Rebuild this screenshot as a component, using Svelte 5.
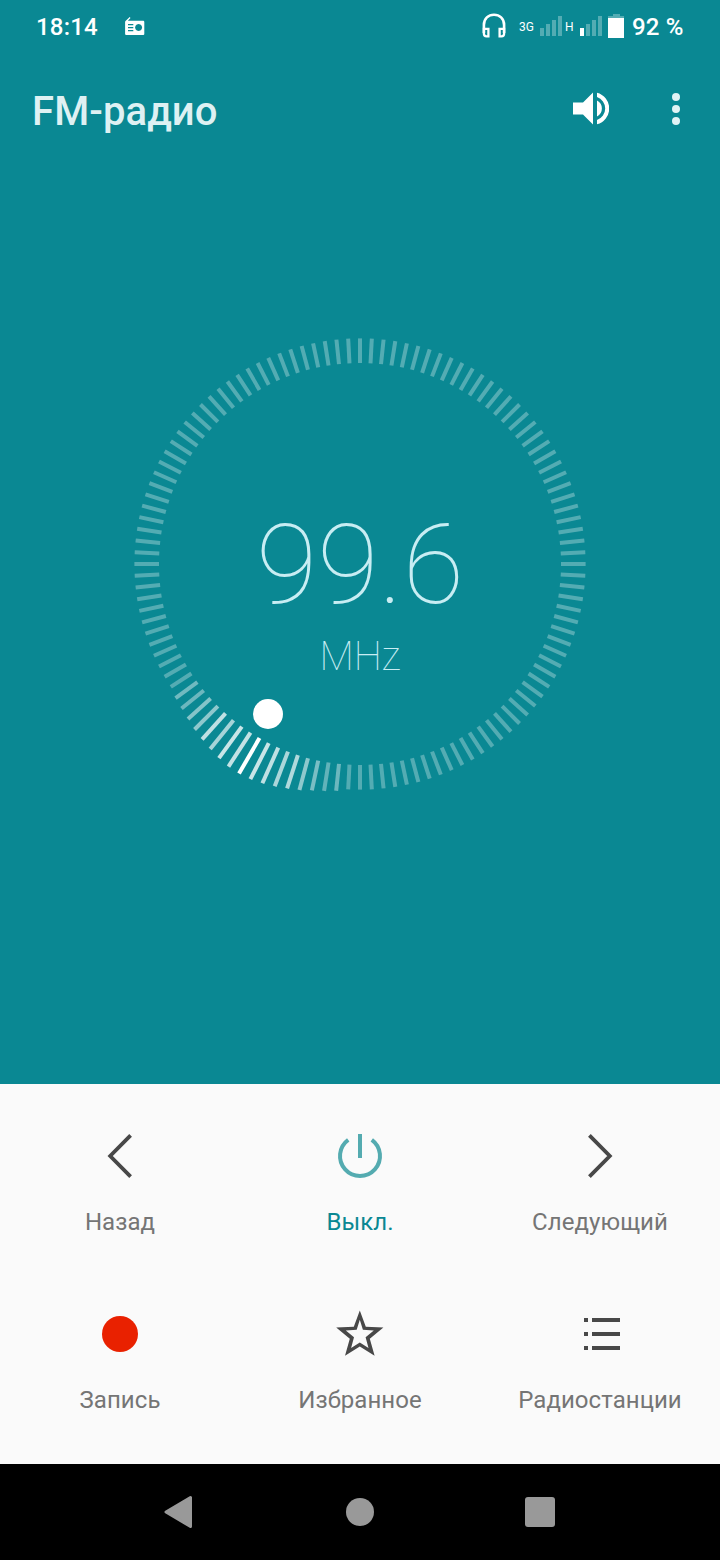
<script>
  const base = 201;
  const outerByDistance = [242, 241.5, 240, 238, 236, 234, 231.5, 229.7, 228];
  const before = [1, 0.78, 0.74, 0.66, 0.68, 0.54, 0.46, 0.36, 0.4];
  const after = [1, 0.76, 0.78, 0.64, 0.74, 0.54, 0.5, 0.4, 0.42];
  const selected = 70;
  const ticks = Array.from({ length: 120 }, (_, i) => {
    const d = i - selected;
    const n = Math.abs(d);
    return {
      angle: i * 3,
      outer: outerByDistance[n] ?? 225.6,
      opacity: (d < 0 ? before[n] : after[n]) ?? 0.3
    };
  });
</script>

<div class="screen">
  <section class="tuner">
    <header class="status">
      <span class="time">18:14</span>
      <svg class="radio" width="20" height="20" viewBox="0 0 20 20">
        <path fill="#fff" fill-rule="evenodd" d="M0.3 4.2 L4.7 0 L5.5 0.9 L2.8 3.8 H18.2 Q19.3 3.8 19.3 4.9 V17 Q19.3 18.1 18.2 18.1 H1.2 Q0.1 18.1 0.1 17 V4.9 Z M3 7 V8.2 H8.3 V7Z M3 10 V11.2 H8.3 V10Z M3 13 V14.2 H8.3 V13Z M13.6 7.1 a3.5 3.5 0 1 0 .01 0Z" />
      </svg>
      <div class="indicators">
        <svg class="phones" width="24" height="26" viewBox="0 0 24 26">
          <path d="M1.9 20 V12 C1.9 5.5 6.5 1.7 12 1.7 S22.1 5.5 22.1 12 V20" fill="none" stroke="#fff" stroke-width="2.6" />
          <path d="M1.9 15.8 H6.4 V23.3 H4.5 Q1.9 23.3 1.9 20.8 Z M22.1 15.8 H17.6 V23.3 H19.5 Q22.1 23.3 22.1 20.8 Z" fill="none" stroke="#fff" stroke-width="2.3" />
        </svg>
        <span class="net g3">3G</span>
        <svg class="bars" width="22" height="20" viewBox="0 0 22 20" fill="#fff" fill-opacity=".3">
          <path d="M0 12h4v8h-4zM6 8h4v12h-4zM12 4h4v16h-4zM18 0h4v20h-4z" />
        </svg>
        <span class="net h">H</span>
        <svg class="bars two" width="22" height="20" viewBox="0 0 22 20" fill="#fff">
          <path d="M0 12h4v8h-4z" />
          <path fill-opacity=".3" d="M6 8h4v12h-4zM12 4h4v16h-4zM18 0h4v20h-4z" />
        </svg>
        <svg class="battery" width="16" height="24" viewBox="0 0 16 24" fill="#fff">
          <path fill-opacity=".3" d="M5 0h7v2h4v2h-16v-2h5z" />
          <path d="M0 4h16v20h-16z" />
        </svg>
        <span class="percent">92 %</span>
      </div>
    </header>

    <div class="appbar">
      <h1>FM-радио</h1>
      <svg class="volume" width="36" height="34" viewBox="0 0 36 34">
        <path fill="#fff" d="M0 10.5h10L20 0.5v32L10 22.5H0z M24 8.5a9 9 0 0 1 0 16z M24 0.8a16.2 16.2 0 0 1 0 31.4v-4.1a12.3 12.3 0 0 0 0-23.2z" />
      </svg>
      <svg class="more" width="8" height="32" viewBox="0 0 8 32" fill="#e1f3f5">
        <circle cx="4" cy="4" r="4" /><circle cx="4" cy="16" r="4" /><circle cx="4" cy="28" r="4" />
      </svg>
    </div>

    <div class="dial">
      <svg width="500" height="500" viewBox="-250 -250 500 500">
        {#each ticks as t}
          <line x1="0" x2="0" y1={-base} y2={-t.outer} transform="rotate({t.angle})" stroke="#fff" stroke-width="4" stroke-opacity={t.opacity} />
        {/each}
        <circle cx="-92" cy="150" r="15" fill="#fff" />
      </svg>
      <div class="reading">
        <div class="value">99.6</div>
        <div class="unit">MHz</div>
      </div>
    </div>
  </section>

  <section class="controls">
    <button>
      <svg width="48" height="48" viewBox="0 0 48 48"><path d="M34.6 3.4 L14.2 24 L34.6 44.6" fill="none" stroke="#484848" stroke-width="3.8" /></svg>
      <span>Назад</span>
    </button>
    <button class="active">
      <svg width="48" height="48" viewBox="0 0 48 48" fill="none" stroke="#54abb0" stroke-width="4">
        <path d="M24 2V26" /><path d="M12.2 7.8A20 20 0 1 0 35.8 7.8" />
      </svg>
      <span>Выкл.</span>
    </button>
    <button>
      <svg width="48" height="48" viewBox="0 0 48 48"><path d="M13.4 3.4 L33.8 24 L13.4 44.6" fill="none" stroke="#484848" stroke-width="3.8" /></svg>
      <span>Следующий</span>
    </button>
    <button>
      <svg width="48" height="48" viewBox="0 0 48 48"><circle cx="24" cy="24" r="18" fill="#e92100" /></svg>
      <span>Запись</span>
    </button>
    <button>
      <svg width="48" height="48" viewBox="0 0 48 48"><path fill="#484848" fill-rule="evenodd" d="M23.8 0.5 L29.8 16.7 L47.4 17.6 L33.8 28.8 L38.6 45.8 L23.8 36.4 L9 45.8 L13.8 28.8 L0.2 17.6 L17.8 16.7 Z M23.8 9.8 L20.7 19.8 L9.8 20.4 L18 27.2 L15.1 38 L23.8 32.6 L32.5 38 L29.6 27.2 L37.8 20.4 L26.9 19.8 Z" /></svg>
      <span>Избранное</span>
    </button>
    <button>
      <svg width="48" height="48" viewBox="0 0 48 48"><path fill="#484848" d="M8 8h4v4h-4zM16 8h28v4h-28zM8 22h4v4h-4zM16 22h28v4h-28zM8 36h4v4h-4zM16 36h28v4h-28z" /></svg>
      <span>Радиостанции</span>
    </button>
  </section>

  <nav>
    <div><svg width="32" height="36" viewBox="0 0 32 36"><path d="M2 18 L26.5 3.5 V32.5 Z" fill="#999" stroke="#999" stroke-width="3" stroke-linejoin="round" /></svg></div>
    <div><svg width="32" height="32" viewBox="0 0 32 32"><circle cx="16" cy="16" r="14" fill="#999" /></svg></div>
    <div><svg width="32" height="32" viewBox="0 0 32 32"><rect x="1" y="1" width="30" height="30" rx="3" fill="#999" /></svg></div>
  </nav>
</div>

<style>
  .screen {
    width: 720px;
    height: 1560px;
    display: flex;
    flex-direction: column;
    font-family: Roboto, sans-serif;
    overflow: hidden;
  }
  svg { display: block; flex: none; }
  .tuner {
    height: 1084px;
    background: #0a8893;
    display: flex;
    flex-direction: column;
  }
  .status {
    height: 52px;
    display: flex;
    align-items: center;
    padding: 0 36px;
    color: #fff;
    font-weight: 500;
    font-size: 24px;
    white-space: nowrap;
  }
  .time { width: 89px; padding-top: 2px; letter-spacing: 0.2px; }
  .radio { margin-top: 1px; }
  .indicators { margin-left: auto; display: flex; align-items: center; }
  .net { font-size: 12px; font-weight: 400; padding-top: 2px; }
  .g3 { margin-left: 13px; width: 21px; }
  .h { margin-left: 3px; width: 15px; }
  .battery { margin-left: 6px; }
  .percent { margin-left: 8px; padding-top: 2px; width: 52px; letter-spacing: 0.2px; }
  .appbar {
    height: 114px;
    display: flex;
    align-items: center;
    padding: 0 40px 0 32px;
  }
  h1 {
    margin: 4px auto 0 0;
    font-size: 40px;
    font-weight: 500;
    letter-spacing: 0.1px;
    color: #def1f3;
  }
  .volume { margin-right: 63px; }
  .dial {
    height: 500px;
    margin-top: 148px;
    display: grid;
    place-items: center;
  }
  .dial > * { grid-area: 1 / 1; }
  .reading { text-align: center; color: #c8edf3; font-weight: 100; padding-top: 53px; }
  .value { font-size: 112px; line-height: 130px; }
  .unit { font-size: 40px; line-height: 48px; margin-top: 3px; letter-spacing: -0.2px; }
  .controls {
    height: 380px;
    background: #fafafa;
    display: grid;
    grid-template-columns: repeat(3, 1fr);
    grid-template-rows: 178px 178px;
  }
  button {
    border: 0;
    background: none;
    padding: 48px 0 0;
    display: flex;
    flex-direction: column;
    align-items: center;
    font: 400 24px/28px Roboto, sans-serif;
    letter-spacing: 0.06px;
    color: #757575;
  }
  button span { margin-top: 28px; white-space: nowrap; }
  .active { color: #0a8893; }
  nav {
    height: 96px;
    background: #000;
    display: grid;
    grid-template-columns: repeat(3, 180px);
    justify-content: center;
  }
  nav div { display: grid; place-items: center; }
</style>
